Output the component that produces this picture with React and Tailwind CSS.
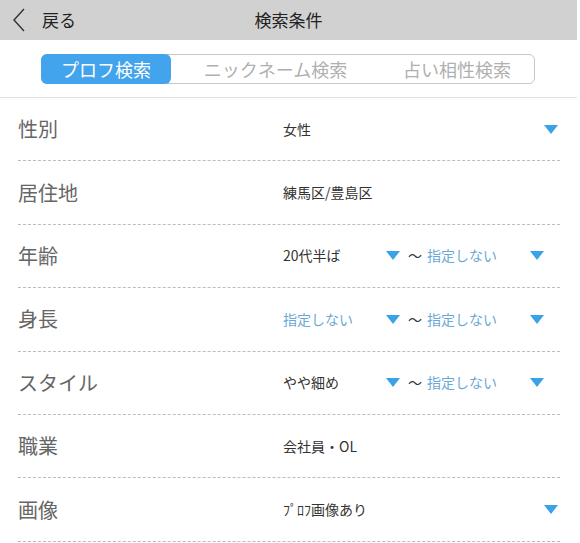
import React from 'react';

const font = { fontFamily: '"Noto Sans CJK JP", "Noto Sans", sans-serif' };

const Tri = ({ className = '' }) => (
  <svg width="14" height="9" viewBox="0 0 14 9" className={className}>
    <path d="M0 0 H14 L7 9 Z" fill="#3aa2e8" />
  </svg>
);

const Range = ({ from, fromBlue }) => (
  <div className="flex items-center">
    <span className={`w-[103px] text-[14px] ${fromBlue ? 'text-[#6aa9d6]' : 'text-[#333]'}`}>{from}</span>
    <Tri />
    <span className="ml-[8px] text-[14px] text-[#333]">～</span>
    <span className="ml-[5px] w-[103px] text-[14px] text-[#6aa9d6]">指定しない</span>
    <Tri />
  </div>
);

const rows = [
  { label: '性別', value: '女性', select: true },
  { label: '居住地', value: '練馬区/豊島区' },
  { label: '年齢', range: { from: '20代半ば' } },
  { label: '身長', range: { from: '指定しない', fromBlue: true } },
  { label: 'スタイル', range: { from: 'やや細め' } },
  { label: '職業', value: '会社員・OL' },
  { label: '画像', value: 'ﾌﾟﾛﾌ画像あり', select: true },
];

const App = () => {
  return (
    <div className="w-[577px] bg-white" style={font}>
      <div className="relative flex h-[40px] items-center bg-[#d1d1d1]">
        <svg width="14" height="24" viewBox="0 0 14 24" className="ml-[12px]">
          <path d="M12 1 L2 12 L12 23" fill="none" stroke="#333" strokeWidth="1.4" />
        </svg>
        <span className="ml-[16px] text-[17px] text-[#222]">戻る</span>
        <span className="absolute left-1/2 -translate-x-1/2 text-[17px] text-[#222]">検索条件</span>
      </div>

      <div className="border-b border-[#e2e2e2] pb-[13px] pt-[14px]">
        <div className="ml-[41px] flex h-[30px] w-[494px] items-stretch rounded-[6px] border border-[#c8c8c8]">
          <div className="-my-px -ml-px flex w-[130px] items-center justify-center rounded-[6px] bg-[#42a4ec] text-[18px] text-white">
            プロフ検索
          </div>
          <div className="flex w-[209px] items-center justify-center text-[18px] text-[#b0b0b0]">ニックネーム検索</div>
          <div className="flex flex-1 items-center justify-center text-[18px] text-[#b0b0b0]">占い相性検索</div>
        </div>
      </div>

      <div className="pl-[18px] pr-[17px]">
        {rows.map((row) => (
          <div key={row.label} className="flex h-[63.4px] items-center border-b border-dashed border-[#bdbdbd]">
            <span className="w-[265px] text-[20px] text-[#666]">{row.label}</span>
            {row.range ? (
              <Range {...row.range} />
            ) : (
              <div className="flex flex-1 items-center justify-between pr-[2px]">
                <span className="text-[14px] text-[#333]">{row.value}</span>
                {row.select && <Tri />}
              </div>
            )}
          </div>
        ))}
      </div>
    </div>
  );
};

export default App;
